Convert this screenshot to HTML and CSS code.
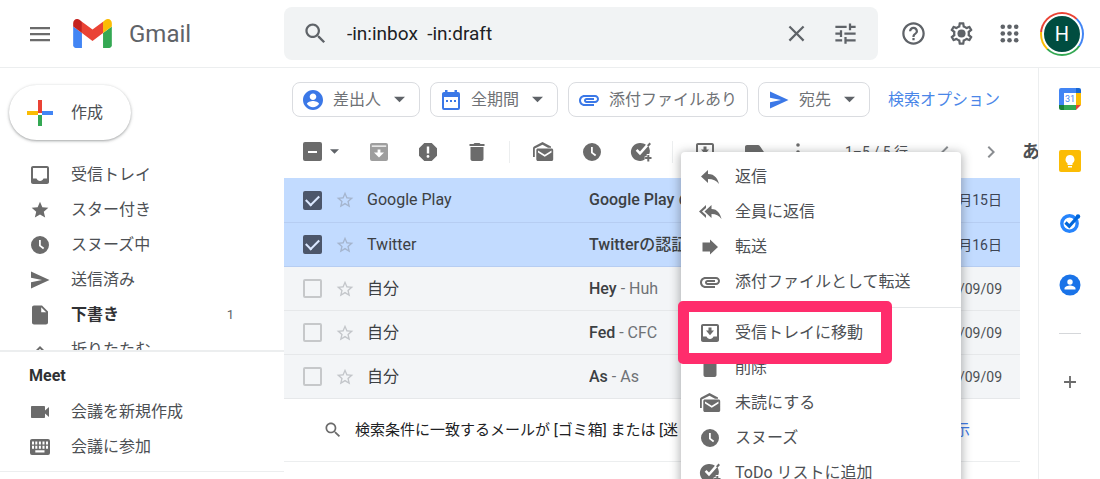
FILE: index.html
```html
<!DOCTYPE html>
<html lang="ja">
<head>
<meta charset="utf-8">
<title>Gmail</title>
<link rel="stylesheet" href="styles.css">
</head>
<body>
<svg class="sprite" aria-hidden="true">
  <symbol id="menu" viewBox="0 0 24 24"><path d="M2 5h20v2.200H2zM2 11h20v2.200H2zM2 17h20v2.200H2z"/></symbol>
  <symbol id="search" viewBox="0 0 24 24"><path d="M15.500 14h-.79l-.28-.27C15.410 12.590 16 11.110 16 9.500 16 5.910 13.090 3 9.500 3S3 5.910 3 9.500 5.910 16 9.500 16c1.610 0 3.090-.59 4.230-1.570l.27.28v.79l5 4.990L20.490 19l-4.990-5zm-6 0C7.010 14 5 11.990 5 9.500S7.010 5 9.500 5 14 7.010 14 9.500 11.990 14 9.500 14z"/></symbol>
  <symbol id="close" viewBox="0 0 24 24"><path d="M19 6.410L17.590 5 12 10.590 6.410 5 5 6.410 10.590 12 5 17.590 6.410 19 12 13.410 17.590 19 19 17.590 13.410 12z"/></symbol>
  <symbol id="tune" viewBox="0 0 24 24"><path d="M3 17v2h6v-2H3zM3 5v2h10V5H3zm10 16v-2h8v-2h-8v-2h-2v6h2zM7 9v2H3v2h4v2h2V9H7zm14 4v-2H11v2h10zm-6-4h2V7h4V5h-4V3h-2v6z"/></symbol>
  <symbol id="help" viewBox="0 0 24 24"><path d="M11 18h2v-2h-2v2zm1-16C6.480 2 2 6.480 2 12s4.480 10 10 10 10-4.480 10-10S17.520 2 12 2zm0 18c-4.410 0-8-3.590-8-8s3.590-8 8-8 8 3.590 8 8-3.590 8-8 8zm0-14c-2.210 0-4 1.790-4 4h2c0-1.100.9-2 2-2s2 .9 2 2c0 2-3 1.750-3 5h2c0-2.250 3-2.500 3-5 0-2.210-1.790-4-4-4z"/></symbol>
  <symbol id="gear" viewBox="0 0 24 24"><path d="M19.430 12.980c.04-.32.07-.64.07-.98 0-.34-.03-.66-.07-.98l2.110-1.650c.19-.15.24-.42.12-.64l-2-3.460c-.09-.16-.26-.25-.44-.25-.06 0-.12.01-.17.03l-2.490 1c-.52-.4-1.080-.73-1.690-.98l-.38-2.650C14.460 2.180 14.250 2 14 2h-4c-.25 0-.46.18-.49.42l-.38 2.650c-.61.25-1.170.59-1.690.98l-2.490-1c-.06-.02-.12-.03-.18-.03-.17 0-.34.09-.43.25l-2 3.460c-.13.22-.07.49.12.64l2.110 1.650c-.04.32-.07.65-.07.98 0 .33.03.66.07.98l-2.110 1.650c-.19.15-.24.42-.12.64l2 3.460c.09.16.26.25.44.25.06 0 .12-.01.17-.03l2.490-1c.52.4 1.080.73 1.690.98l.38 2.650c.03.24.24.42.49.42h4c.25 0 .46-.18.49-.42l.38-2.650c.61-.25 1.170-.59 1.690-.98l2.490 1c.06.02.12.03.18.03.17 0 .34-.09.43-.25l2-3.460c.12-.22.07-.49-.12-.64l-2.110-1.650zm-1.980-1.710c.04.31.05.52.05.73 0 .21-.02.43-.05.73l-.14 1.130.89.7 1.080.84-.7 1.210-1.270-.51-1.040-.42-.9.68c-.43.32-.84.56-1.250.73l-1.060.43-.16 1.130-.2 1.350h-1.400l-.19-1.350-.16-1.130-1.060-.43c-.43-.18-.83-.41-1.230-.71l-.91-.7-1.060.43-1.270.51-.7-1.210 1.080-.84.89-.7-.14-1.130c-.03-.31-.05-.54-.05-.74s.02-.43.05-.73l.14-1.130-.89-.7-1.080-.84.7-1.210 1.270.51 1.040.42.9-.68c.43-.32.84-.56 1.250-.73l1.060-.43.16-1.130.2-1.350h1.390l.19 1.350.16 1.130 1.060.43c.43.18.83.41 1.230.71l.91.7 1.060-.43 1.270-.51.7 1.210-1.070.85-.89.7.14 1.130z"/><circle cx="12" cy="12" r="3.600"/></symbol>
  <symbol id="apps" viewBox="0 0 24 24"><g><circle cx="5" cy="5" r="2.400"/><circle cx="12" cy="5" r="2.400"/><circle cx="19" cy="5" r="2.400"/><circle cx="5" cy="12" r="2.400"/><circle cx="12" cy="12" r="2.400"/><circle cx="19" cy="12" r="2.400"/><circle cx="5" cy="19" r="2.400"/><circle cx="12" cy="19" r="2.400"/><circle cx="19" cy="19" r="2.400"/></g></symbol>
  <symbol id="inbox" viewBox="0 0 24 24"><path d="M19 3H5c-1.100 0-2 .9-2 2v14c0 1.100.9 2 2 2h14c1.100 0 2-.9 2-2V5c0-1.100-.9-2-2-2zm0 12.500h-3.500c-.6 1.500-1.900 2.500-3.500 2.500s-2.900-1-3.500-2.500H5V5h14v10.500z"/></symbol>
  <symbol id="star" viewBox="0 0 24 24"><path d="M12 17.270L18.180 21l-1.640-7.030L22 9.240l-7.190-.61L12 2 9.190 8.630 2 9.240l5.460 4.730L5.820 21z"/></symbol>
  <symbol id="star-line" viewBox="0 0 24 24"><path d="M22 9.240l-7.190-.62L12 2 9.190 8.630 2 9.240l5.460 4.730L5.820 21 12 17.270 18.180 21l-1.630-7.030L22 9.240zM12 15.400l-3.760 2.270 1-4.280-3.320-2.880 4.380-.38L12 6.100l1.710 4.040 4.380.38-3.320 2.880 1 4.280L12 15.400z"/></symbol>
  <symbol id="clock" viewBox="0 0 24 24"><path fill-rule="evenodd" d="M12 3a9 9 0 1 0 0 18 9 9 0 0 0 0-18zM11 7h1.800v5.200l3.400 2.600-1.100 1.400L11 13z"/></symbol>
  <symbol id="send" viewBox="0 0 24 24"><path d="M3 20.500L21.500 12 3 3.500v6.300L14 12 3 14.200z"/></symbol>
  <symbol id="file" viewBox="0 0 24 24"><path d="M6 2.500c-1.100 0-2 .9-2 2v15c0 1.100.9 2 2 2h12c1.100 0 2-.9 2-2V8.500l-6-6H6zm7.200 6.800V4.200l5 5.100h-5z"/></symbol>
  <symbol id="up" viewBox="0 0 24 24"><path d="M12 8l-6 6 1.400 1.400L12 10.800l4.600 4.600L18 14z"/></symbol>
  <symbol id="video" viewBox="0 0 24 24"><path d="M17 10.500V7c0-.55-.45-1-1-1H4c-.55 0-1 .45-1 1v10c0 .55.45 1 1 1h12c.55 0 1-.45 1-1v-3.500l4 3.500V7l-4 3.500z"/></symbol>
  <symbol id="keyboard" viewBox="0 0 24 24"><path fill-rule="evenodd" d="M4 4h16a2 2 0 0 1 2 2v12a2 2 0 0 1-2 2H4a2 2 0 0 1-2-2V6c0-1.100.9-2 2-2zM4 6.500v3h2v-3zM7.300 6.500v3h2v-3zM10.900 6.500v3h2v-3zM14.500 6.500v3h2v-3zM18 6.500v3h2v-3zM4 10.700v3h2v-3zM7.300 10.700v3h2v-3zM10.900 10.700v3h2v-3zM14.500 10.700v3h2v-3zM18 10.700v3h2v-3zM7.300 15.300v2.200h9.200v-2.200z"/></symbol>
  <symbol id="person" viewBox="0 0 24 24"><path d="M12 2C6.480 2 2 6.480 2 12s4.480 10 10 10 10-4.480 10-10S17.520 2 12 2zm0 3.500c1.800 0 3.300 1.500 3.300 3.300S13.800 12.100 12 12.100s-3.300-1.500-3.300-3.300S10.200 5.500 12 5.500zm0 13.700c-2.500 0-4.700-1.280-6-3.220.03-1.990 4-3.080 6-3.080s5.970 1.090 6 3.080c-1.290 1.940-3.500 3.220-6 3.220z"/></symbol>
  <symbol id="calendar" viewBox="0 0 24 24"><path fill-rule="evenodd" d="M5 4h1V2h2.500v2h7V2H18v2h1a2 2 0 0 1 2 2v14a2 2 0 0 1-2 2H5a2 2 0 0 1-2-2V6c0-1.100.9-2 2-2zM5 9v11h14V9zM7 12h2v2H7zM11 12h2v2h-2zM15 12h2v2h-2z"/></symbol>
  <symbol id="clip" viewBox="0 0 24 24"><path d="M2 12.500C2 9.460 4.460 7 7.500 7H18c2.210 0 4 1.790 4 4s-1.790 4-4 4H9.500C8.120 15 7 13.880 7 12.500S8.120 10 9.500 10H17v2H9.410c-.55 0-.55 1 0 1H18c1.100 0 2-.9 2-2s-.9-2-2-2H7.500C5.570 9 4 10.570 4 12.500S5.570 16 7.500 16H17v2H7.500C4.460 18 2 15.540 2 12.500z"/></symbol>
  <symbol id="caret" viewBox="0 0 12 12"><path d="M0 3h12L6 9z"/></symbol>
  <symbol id="archive" viewBox="0 0 24 24"><path fill-rule="evenodd" d="M5 3h14a2 2 0 0 1 2 2v14a2 2 0 0 1-2 2H5a2 2 0 0 1-2-2V5c0-1.100.9-2 2-2zM4.800 5.400v1.400h14.400V5.400zM10.600 9.500v3H7L12 17.500l5-5h-3.600v-3z"/></symbol>
  <symbol id="report" viewBox="0 0 24 24"><path d="M15.730 3H8.270L3 8.270v7.460L8.270 21h7.460L21 15.730V8.270L15.730 3zM12 17.800c-.8 0-1.400-.6-1.400-1.400s.6-1.400 1.400-1.400 1.400.6 1.400 1.400-.6 1.400-1.400 1.400zm1.200-4.300h-2.400V6.500h2.400v7z"/></symbol>
  <symbol id="trash" viewBox="0 0 24 24"><path d="M5.500 19c0 1.100.9 2 2 2h9c1.100 0 2-.9 2-2V7h-13v12zM19.500 4h-4l-1-1h-5l-1 1h-4v2h15V4z"/></symbol>
  <symbol id="unread" viewBox="0 0 24 24"><path d="M3.800 17H2V8.200c0-.7.4-1.300 1-1.700L11.500 2 20 6.500v1.300h-3L11.500 4.700 3.800 8.500z"/><path fill-rule="evenodd" d="M7 8.500h13.500c1 0 1.700.7 1.700 1.700v9c0 1-.7 1.800-1.700 1.800H7c-1 0-1.700-.8-1.700-1.800v-9c0-1 .7-1.700 1.700-1.700zm0 2v2l6.750 4.300 6.750-4.300v-2l-6.750 4.200z"/></symbol>
  <symbol id="task" viewBox="0 0 24 24"><path fill-rule="evenodd" d="M11.500 3c2 0 3.900.7 5.400 1.800L11 11.500 8.500 9 6.700 10.800 11 15.200l8.300-9.300A9 9 0 0 1 20.300 14h-2.600v2.200h-2v3.400A9 9 0 1 1 11.500 3z"/><path d="M18.300 15h2v2h2.200v2h-2.200v2.500h-2V19h-2.200v-2h2.200zM18 5.200L20.500 2.500 22 4l-2.500 2.700z"/></symbol>
  <symbol id="move" viewBox="0 0 24 24"><path d="M19 3H5c-1.100 0-2 .9-2 2v14c0 1.100.9 2 2 2h14c1.100 0 2-.9 2-2V5c0-1.100-.9-2-2-2zm0 12.500h-3.500c-.6 1.500-1.900 2.500-3.500 2.500s-2.900-1-3.500-2.500H5V5h14v10.500z"/><path d="M16 9.500h-2.500V6.500h-3v3H8l4 4.700z"/></symbol>
  <symbol id="label" viewBox="0 0 24 24"><path d="M17.630 5.840C17.270 5.330 16.670 5 16 5H5c-1.100 0-2 .9-2 2v10c0 1.100.9 2 2 2h11c.67 0 1.270-.33 1.630-.84L22 12l-4.370-6.160z"/></symbol>
  <symbol id="more" viewBox="0 0 24 24"><circle cx="12" cy="5" r="1.800"/><circle cx="12" cy="12" r="1.800"/><circle cx="12" cy="19" r="1.800"/></symbol>
  <symbol id="left" viewBox="0 0 24 24"><path d="M15.400 7.400L14 6l-6 6 6 6 1.400-1.400L10.800 12z"/></symbol>
  <symbol id="right" viewBox="0 0 24 24"><path d="M8.600 16.600L10 18l6-6-6-6-1.400 1.400L13.200 12z"/></symbol>
  <symbol id="reply" viewBox="0 0 24 24"><path d="M10 9V5l-7 6.500 7 6.500v-4c5 0 8.500 1.600 11 5.100-1-5-4-10.100-11-10.100z"/></symbol>
  <symbol id="reply-all" viewBox="0 0 24 24"><path d="M8 8V5l-7 6.500L8 18v-3l-4-3.500zm5.500 1V5l-7 6.500 7 6.500v-4c4.500 0 7.500 1.600 10 5.100-1-5-4-10.100-10-10.100z"/></symbol>
  <symbol id="forward" viewBox="0 0 24 24"><path d="M4.500 7.500H12v-3l8 7.500-8 7.500v-3H4.500z"/></symbol>
  <symbol id="plus" viewBox="0 0 24 24"><path d="M18.500 13H13v5.500h-2V13H5.500v-2H11V5.500h2V11h5.500z"/></symbol>
</svg>

<header class="topbar">
  <div class="brand">
    <button class="icon-btn menu-btn" aria-label="メインメニュー"><svg class="icon"><use href="#menu"/></svg></button>
    <a class="logo" href="#inbox">
      <svg class="logo-mark" viewBox="52 42 88 66" aria-hidden="true">
        <path fill="#4285f4" d="M58 108h14V74L52 59v43c0 3.320 2.690 6 6 6"/>
        <path fill="#34a853" d="M120 108h14c3.320 0 6-2.690 6-6V59l-20 15"/>
        <path fill="#fbbc04" d="M120 48v26l20-15v-8c0-7.420-8.470-11.650-14.400-7.200"/>
        <path fill="#ea4335" d="M72 74V48l24 18 24-18v26L96 92"/>
        <path fill="#c5221f" d="M52 51v8l20 15V48l-5.600-4.200c-5.940-4.450-14.400-.22-14.400 7.200"/>
      </svg>
      <span>Gmail</span>
    </a>
  </div>
  <form class="search">
    <button type="button" class="icon-btn" aria-label="検索"><svg class="icon large"><use href="#search"/></svg></button>
    <input type="text" aria-label="メールを検索" value="-in:inbox  -in:draft">
    <button type="button" class="icon-btn" aria-label="検索をクリア"><svg class="icon large"><use href="#close"/></svg></button>
    <button type="button" class="icon-btn" aria-label="検索オプションを表示"><svg class="icon large"><use href="#tune"/></svg></button>
  </form>
  <div class="tools">
    <button class="icon-btn" aria-label="サポート"><svg class="icon large"><use href="#help"/></svg></button>
    <button class="icon-btn" aria-label="設定"><svg class="icon large"><use href="#gear"/></svg></button>
    <button class="icon-btn" aria-label="Google アプリ"><svg class="icon apps"><use href="#apps"/></svg></button>
    <button class="avatar" aria-label="アカウント"><span>H</span></button>
  </div>
</header>

<div class="shell">
  <aside class="sidebar">
    <button class="compose">
      <svg class="compose-plus" viewBox="0 0 26 26" aria-hidden="true"><path fill="#ea4335" d="M11 0h4v13h-4z"/><path fill="#fbbc04" d="M0 11h11v4H0z"/><path fill="#4285f4" d="M15 11h11v4H15z"/><path fill="#34a853" d="M11 15h4v11h-4z"/></svg>
      作成
    </button>
    <nav class="folders">
      <a href="#inbox"><svg class="icon"><use href="#inbox"/></svg>受信トレイ</a>
      <a href="#starred"><svg class="icon small"><use href="#star"/></svg>スター付き</a>
      <a href="#snoozed"><svg class="icon"><use href="#clock"/></svg>スヌーズ中</a>
      <a href="#sent"><svg class="icon"><use href="#send"/></svg>送信済み</a>
      <a class="unread" href="#drafts"><svg class="icon"><use href="#file"/></svg>下書き<span class="count">1</span></a>
      <a href="#less"><svg class="icon"><use href="#up"/></svg>折りたたむ</a>
    </nav>
    <section class="meet">
      <h2>Meet</h2>
      <a href="#new-meeting"><svg class="icon"><use href="#video"/></svg>会議を新規作成</a>
      <a href="#join"><svg class="icon"><use href="#keyboard"/></svg>会議に参加</a>
    </section>
  </aside>

  <main class="content">
    <div class="chips">
      <button class="chip"><svg class="icon"><use href="#person"/></svg>差出人<svg class="caret"><use href="#caret"/></svg></button>
      <button class="chip"><svg class="icon"><use href="#calendar"/></svg>全期間<svg class="caret"><use href="#caret"/></svg></button>
      <button class="chip plain"><svg class="icon"><use href="#clip"/></svg>添付ファイルあり</button>
      <button class="chip"><svg class="icon"><use href="#send"/></svg>宛先<svg class="caret"><use href="#caret"/></svg></button>
      <a href="#advanced">検索オプション</a>
    </div>

    <div class="toolbar">
      <div class="select-all">
        <input type="checkbox" class="box mixed" aria-label="すべて選択">
        <svg class="caret"><use href="#caret"/></svg>
      </div>
      <button class="faded" aria-label="アーカイブ"><svg class="icon"><use href="#archive"/></svg></button>
      <button aria-label="迷惑メールを報告"><svg class="icon"><use href="#report"/></svg></button>
      <button aria-label="削除"><svg class="icon"><use href="#trash"/></svg></button>
      <span class="rule"></span>
      <button aria-label="未読にする"><svg class="icon"><use href="#unread"/></svg></button>
      <button aria-label="スヌーズ"><svg class="icon"><use href="#clock"/></svg></button>
      <button aria-label="ToDo リストに追加"><svg class="icon"><use href="#task"/></svg></button>
      <span class="rule"></span>
      <button aria-label="受信トレイに移動"><svg class="icon"><use href="#move"/></svg></button>
      <button aria-label="ラベル"><svg class="icon"><use href="#label"/></svg></button>
      <button class="more" aria-label="その他"><svg class="icon"><use href="#more"/></svg></button>
      <span class="range">1–5 / 5 行</span>
      <button class="pager" aria-label="前へ"><svg class="icon"><use href="#left"/></svg></button>
      <button class="pager" aria-label="次へ"><svg class="icon"><use href="#right"/></svg></button>
      <button class="ime" aria-label="入力ツール">あ</button>
    </div>

    <table class="mails">
      <tbody>
        <tr class="selected"><td class="pick"><input type="checkbox" class="box" aria-label="Google Play" checked></td><td class="fav"><button aria-label="スター"><svg class="icon small"><use href="#star-line"/></svg></button></td><td class="from">Google Play</td><td class="subject"><b>Google Play の</b></td><td class="date">月15日</td></tr>
        <tr class="selected"><td class="pick"><input type="checkbox" class="box" aria-label="Twitter" checked></td><td class="fav"><button aria-label="スター"><svg class="icon small"><use href="#star-line"/></svg></button></td><td class="from">Twitter</td><td class="subject"><b>Twitterの認証</b></td><td class="date">月16日</td></tr>
        <tr><td class="pick"><input type="checkbox" class="box" aria-label="Hey"></td><td class="fav"><button aria-label="スター"><svg class="icon small"><use href="#star-line"/></svg></button></td><td class="from">自分</td><td class="subject"><b>Hey</b> - Huh</td><td class="date">/09/09</td></tr>
        <tr><td class="pick"><input type="checkbox" class="box" aria-label="Fed"></td><td class="fav"><button aria-label="スター"><svg class="icon small"><use href="#star-line"/></svg></button></td><td class="from">自分</td><td class="subject"><b>Fed</b> - CFC</td><td class="date">/09/09</td></tr>
        <tr><td class="pick"><input type="checkbox" class="box" aria-label="As"></td><td class="fav"><button aria-label="スター"><svg class="icon small"><use href="#star-line"/></svg></button></td><td class="from">自分</td><td class="subject"><b>As</b> - As</td><td class="date">/09/09</td></tr>
      </tbody>
    </table>

    <div class="notice">
      <svg class="icon small"><use href="#search"/></svg>
      <span>検索条件に一致するメールが [ゴミ箱] または [迷</span>
      <a href="#show">表示</a>
    </div>

    <ul class="popup" role="menu">
      <li><button role="menuitem"><svg class="icon"><use href="#reply"/></svg>返信</button></li>
      <li><button role="menuitem"><svg class="icon"><use href="#reply-all"/></svg>全員に返信</button></li>
      <li><button role="menuitem"><svg class="icon"><use href="#forward"/></svg>転送</button></li>
      <li><button role="menuitem"><svg class="icon"><use href="#clip"/></svg>添付ファイルとして転送</button></li>
      <li class="divided marked"><button role="menuitem"><svg class="icon"><use href="#move"/></svg>受信トレイに移動</button></li>
      <li><button role="menuitem"><svg class="icon"><use href="#trash"/></svg>削除</button></li>
      <li><button role="menuitem"><svg class="icon"><use href="#unread"/></svg>未読にする</button></li>
      <li><button role="menuitem"><svg class="icon"><use href="#clock"/></svg>スヌーズ</button></li>
      <li><button role="menuitem"><svg class="icon"><use href="#task"/></svg>ToDo リストに追加</button></li>
    </ul>
  </main>

  <aside class="rail">
    <button aria-label="カレンダー"><svg viewBox="0 0 22 22"><path fill="#4285f4" d="M2 0h15v5H5v12H0V2a2 2 0 0 1 2-2z"/><path fill="#1967d2" d="M17 0h3a2 2 0 0 1 2 2v3h-5z"/><path fill="#fbbc04" d="M17 5h5v12h-5z"/><path fill="#34a853" d="M5 17h12v5H5z"/><path fill="#188038" d="M0 17h5v5H2a2 2 0 0 1-2-2z"/><path fill="#ea4335" d="M17 17h5l-5 5z"/><path fill="#fff" d="M5 5h12v12H5z"/><text x="11" y="14" text-anchor="middle">31</text></svg></button>
    <button aria-label="Keep"><svg viewBox="0 0 22 22"><rect width="22" height="22" rx="2" fill="#fbbc04"/><path fill="#fff" d="M11 5a4.500 4.500 0 0 0-2.500 8.200V15h5v-1.800A4.500 4.500 0 0 0 11 5zM9 16h4v1.500H9z"/></svg></button>
    <button aria-label="ToDo リスト"><svg viewBox="0 0 22 22"><circle cx="10.500" cy="11.500" r="7.700" fill="none" stroke="#2684fc" stroke-width="3.400"/><path fill="none" stroke="#0066da" stroke-width="3.200" d="M6.500 10.500l3.800 3.700L19 4.500"/><circle cx="19" cy="4.500" r="2.200" fill="#0066da"/></svg></button>
    <button aria-label="連絡先"><svg viewBox="0 0 22 22"><circle cx="11" cy="11" r="10.500" fill="#1a73e8"/><circle cx="11" cy="8" r="2.700" fill="#fff"/><path fill="#fff" d="M5.500 15.500v-1c0-2 3.500-3 5.500-3s5.500 1 5.500 3v1z"/></svg></button>
    <span class="rail-rule"></span>
    <button class="add" aria-label="アドオンを取得"><svg class="icon"><use href="#plus"/></svg></button>
  </aside>
</div>
</body>
</html>
```
FILE: styles.css
```css
*, *::before, *::after { box-sizing: border-box; }

body {
  margin: 0;
  height: 100vh;
  display: flex;
  flex-direction: column;
  overflow: hidden;
  background: #fff;
  color: #4d5054;
  font: 16px/24px Roboto, "Noto Sans CJK JP", sans-serif;
}

button {
  margin: 0;
  padding: 0;
  border: 0;
  background: none;
  color: inherit;
  font: inherit;
  display: flex;
  align-items: center;
  justify-content: center;
}

a { color: inherit; text-decoration: none; }

.sprite { display: none; }

.icon {
  width: 24px;
  height: 24px;
  flex: none;
  fill: #6b6b6b;
}
.icon.large { width: 27px; height: 27px; fill: #5f6368; }
.icon.small { width: 20px; height: 20px; margin: 0 2px; }
.caret { width: 11px; height: 11px; flex: none; fill: #5f6368; }

.topbar {
  flex: none;
  height: 68px;
  display: flex;
  align-items: center;
  border-bottom: 1px solid #eceeef;
}
.brand {
  width: 284px;
  flex: none;
  display: flex;
  align-items: center;
  gap: 21px;
  padding-left: 28px;
}
.logo {
  display: flex;
  align-items: center;
  gap: 17px;
  color: #5f6368;
  font-size: 24px;
}
.logo-mark { width: 39px; height: 29px; }

.search {
  flex: 1;
  height: 53px;
  margin: 0;
  display: flex;
  align-items: center;
  padding: 0 8px 0 7px;
  border-radius: 8px;
  background: #f1f3f4;
}
.search .icon-btn { width: 49px; height: 49px; }
.search input {
  flex: 1;
  min-width: 0;
  padding: 0 7px;
  border: 0;
  outline: 0;
  background: none;
  color: #202124;
  font: 19px/24px Roboto, "Noto Sans CJK JP", sans-serif;
}
.tools {
  flex: none;
  display: flex;
  align-items: center;
  padding: 0 16px 0 11px;
}
.tools .icon-btn { width: 48px; height: 48px; }
.icon.apps { width: 23px; height: 23px; fill: #5f6368; }
.avatar {
  width: 44px;
  height: 44px;
  margin-left: 7px;
  border-radius: 50%;
  background: conic-gradient(from 315deg, #ea4335 0 90deg, #4285f4 90deg 170deg, #34a853 170deg 270deg, #fbbc04 270deg 320deg, #ea4335 320deg);
}
.avatar span {
  width: 40px;
  height: 40px;
  border: 2px solid #fff;
  border-radius: 50%;
  background: #004d40;
  color: #fff;
  font-size: 20px;
  line-height: 36px;
}

.shell { flex: 1; min-height: 0; display: flex; }

.sidebar {
  width: 284px;
  flex: none;
  display: flex;
  flex-direction: column;
  padding: 17px 0 7px;
}
.compose {
  flex: none;
  align-self: flex-start;
  gap: 18px;
  height: 55px;
  margin: 0 0 17px 9px;
  padding: 0 28px 0 18px;
  border-radius: 28px;
  box-shadow: 0 1px 2px rgba(60, 64, 67, .3), 0 1px 3px 1px rgba(60, 64, 67, .15);
}
.compose-plus { width: 26px; height: 26px; }
.folders { flex: 1; min-height: 0; overflow: hidden; }
.folders a, .meet a {
  display: flex;
  align-items: center;
  gap: 19px;
  height: 35px;
  padding: 0 50px 0 28px;
}
.folders .unread { color: #303134; font-weight: 700; }
.count { margin-left: auto; color: #5f6368; font-size: 13px; font-weight: 400; }
.meet {
  flex: none;
  padding: 8px 0 7px;
  border-top: 2px solid #eceeef;
  border-bottom: 1px solid #eceeef;
}
.meet h2 {
  margin: 0;
  padding: 4px 0 6px 29px;
  color: #303134;
  font-size: 16px;
  line-height: 24px;
  font-weight: 700;
}

.content {
  position: relative;
  flex: 1;
  min-width: 0;
  overflow: hidden;
}
.chips {
  display: flex;
  align-items: center;
  gap: 10px;
  padding: 14px 8px 8px;
}
.chip {
  height: 35px;
  gap: 8px;
  padding: 0 14px 0 8px;
  border: 1px solid #dadce0;
  border-radius: 8px;
  color: #6f7276;
}
.chip .icon { fill: #3b78e7; }
.chip .caret { margin-left: 5px; }
.chip.plain { padding-right: 10px; }
.chips a { margin-left: 8px; color: #4a86e8; }

.toolbar {
  display: flex;
  align-items: center;
  height: 53px;
  white-space: nowrap;
}
.toolbar button { width: 49px; height: 49px; flex: none; }
.toolbar .faded { opacity: .65; }
.toolbar .more { width: 39px; }
.toolbar .pager { width: 46px; }
.toolbar .ime {
  width: 24px;
  padding-left: 8px;
  justify-content: flex-start;
  font-size: 18px;
  font-weight: 700;
}
.select-all {
  width: 70px;
  flex: none;
  display: flex;
  align-items: center;
  gap: 8px;
  padding-left: 19px;
}
.select-all .caret { width: 9px; height: 9px; }
.rule { width: 1px; height: 22px; flex: none; margin: 0 8px; background: #eceeef; }
.rule ~ .rule { margin: 0 7px; }
.range { flex: 1; padding-right: 14px; text-align: right; font-size: 14px; }
.pager .icon { fill: #8a8d91; }

.box {
  appearance: none;
  width: 19px;
  height: 19px;
  flex: none;
  display: block;
  margin: 0;
  border: 2px solid #c6c8ca;
  border-radius: 2px;
}
.box:checked { border-color: #4c566a; background: #4c566a; }
.box:checked::before {
  content: "";
  display: block;
  width: 13px;
  height: 8px;
  margin: 2px 0 0 1px;
  border: solid #dbe8ff;
  border-width: 0 0 2px 2px;
  transform: rotate(-45deg);
}
.box.mixed { border-color: #6b6b6b; background: #6b6b6b; }
.box.mixed::before {
  content: "";
  display: block;
  height: 2px;
  margin: 7px 3px;
  background: #fff;
}

.mails {
  width: calc(100% - 18px);
  table-layout: fixed;
  border-collapse: collapse;
}
.mails tr { height: 44px; background: #f3f5f7; }
.mails .selected { background: #c2dbff; color: #3c4454; }
.mails td {
  padding: 1px 0 0;
  border-bottom: 1px solid #e6e8ea;
  overflow: hidden;
  white-space: nowrap;
}
.mails .selected td { border-color: #b6cdf2; }
.mails .pick { width: 49px; padding-left: 19px; }
.mails .fav { width: 34px; }
.fav .icon { fill: #c3c6ca; }
.selected .fav .icon { fill: #a5b5ce; }
.mails .from { width: 222px; color: #3c4043; }
.mails .subject { color: #6f7276; }
.subject b { color: #3c4043; font-weight: 500; }
.mails .date { width: 90px; padding-right: 18px; text-align: right; font-size: 14px; }

.notice {
  display: flex;
  align-items: center;
  gap: 10px;
  width: calc(100% - 18px);
  height: 63px;
  padding: 0 50px 0 37px;
  border-bottom: 1px solid #eceeef;
  color: #202124;
  font-size: 15px;
  white-space: nowrap;
}
.notice a { margin-left: auto; color: #3b78e7; }

.popup {
  position: absolute;
  top: 84px;
  left: 397px;
  width: 280px;
  margin: 0;
  padding: 7px 0;
  list-style: none;
  background: #fff;
  border-radius: 4px;
  box-shadow: 0 2px 10px 2px rgba(60, 64, 67, .35);
}
.popup button {
  width: 100%;
  height: 35px;
  gap: 13px;
  padding-left: 17px;
  justify-content: flex-start;
}
.popup .divided { margin-top: 8px; padding-top: 7px; border-top: 1px solid #e4e6e8; }
.popup .marked { position: relative; }
.marked::after {
  content: "";
  position: absolute;
  top: -7px;
  left: -3px;
  width: 214px;
  height: 63px;
  border: 11px solid #ff2d6c;
  border-radius: 5px;
}

.rail {
  width: 62px;
  flex: none;
  display: flex;
  flex-direction: column;
  align-items: center;
  border-left: 1px solid #eceeef;
}
.rail button { width: 61px; height: 61px; margin-bottom: 1px; }
.rail button svg { width: 22px; height: 22px; }
.rail text { fill: #4285f4; font: 9px Roboto, sans-serif; }
.rail-rule { width: 22px; height: 1px; margin: 17px 0; background: #d5d7da; }
```
